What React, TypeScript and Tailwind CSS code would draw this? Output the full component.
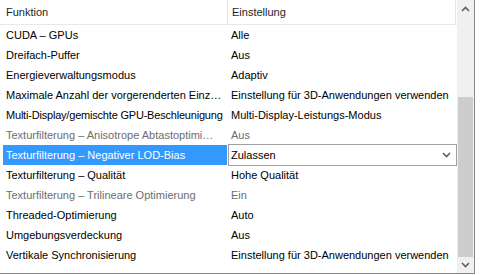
import React from "react";

type Row = { f: string; v: string; gray?: boolean; sel?: boolean; tight?: boolean };

const rows: Row[] = [
  { f: "CUDA – GPUs", v: "Alle" },
  { f: "Dreifach-Puffer", v: "Aus" },
  { f: "Energieverwaltungsmodus", v: "Adaptiv" },
  { f: "Maximale Anzahl der vorgerenderten Einz…", v: "Einstellung für 3D-Anwendungen verwenden" },
  { f: "Multi-Display/gemischte GPU-Beschleunigung", v: "Multi-Display-Leistungs-Modus", tight: true },
  { f: "Texturfilterung – Anisotrope Abtastoptimi…", v: "Aus", gray: true },
  { f: "Texturfilterung – Negativer LOD-Bias", v: "Zulassen", sel: true },
  { f: "Texturfilterung – Qualität", v: "Hohe Qualität" },
  { f: "Texturfilterung – Trilineare Optimierung", v: "Ein", gray: true },
  { f: "Threaded-Optimierung", v: "Auto" },
  { f: "Umgebungsverdeckung", v: "Aus" },
  { f: "Vertikale Synchronisierung", v: "Einstellung für 3D-Anwendungen verwenden" },
];

function Chevron({ up = false }: { up?: boolean }) {
  return (
    <svg width="9" height="6" viewBox="0 0 9 6">
      <path
        d={up ? "M1 5 L4.5 1.5 L8 5" : "M1 1 L4.5 4.5 L8 1"}
        fill="none"
        stroke="#606060"
        strokeWidth="1.6"
      />
    </svg>
  );
}

export default function App() {
  return (
    <div className="w-[483px] h-[275px] bg-white font-['Liberation_Sans',Arial,sans-serif] text-[11px] text-black overflow-hidden">
      <div className="flex w-[475px] h-[274px] border-r border-b border-[#828790]">
        <div className="w-[457px] flex flex-col">
          <div className="flex h-[25px] border-b border-[#e3e9f1] text-[#1e1e1e]">
            <div className="w-[228px] border-r border-[#e5e5e5] pl-[6px] flex items-center">Funktion</div>
            <div className="w-[228px] border-r border-[#e3e9f1] pl-[4px] flex items-center">Einstellung</div>
          </div>
          {rows.map((r, i) => (
            <div key={i} className="flex h-[20px]">
              <div className="w-[228px] pl-[3px] flex">
                <div
                  className={
                    (r.sel
                      ? "bg-[#3399ff] text-white "
                      : r.gray
                      ? "text-[#6d6d6d] "
                      : "") +
                    (r.tight ? "tracking-[-0.2px] " : "") +
                    "w-[224px] h-[20px] pl-[3px] flex items-center whitespace-nowrap overflow-hidden"
                  }
                >
                  {r.f}
                </div>
              </div>
              {r.sel ? (
                <div className="flex-1 flex items-start">
                  <div className="w-full h-[22px] -mt-[1px] border border-[#a0a0a0] bg-white flex items-center justify-between pl-[2px] pr-[5px] relative z-10">
                    <span>{r.v}</span>
                    <Chevron />
                  </div>
                </div>
              ) : (
                <div
                  className={
                    r.gray
                      ? "flex-1 pl-[3px] flex items-center whitespace-nowrap text-[#6d6d6d]"
                      : "flex-1 pl-[3px] flex items-center whitespace-nowrap"
                  }
                >
                  {r.v}
                </div>
              )}
            </div>
          ))}
        </div>
        <div className="w-[17px] bg-[#f0f0f0] flex flex-col">
          <div className="h-[17px] flex items-center justify-center">
            <Chevron up />
          </div>
          <div className="h-[80px]" />
          <div className="h-[160px] mx-[1px] bg-[#cdcdcd]" />
          <div className="h-[16px] flex items-center justify-center">
            <Chevron />
          </div>
        </div>
      </div>
    </div>
  );
}
